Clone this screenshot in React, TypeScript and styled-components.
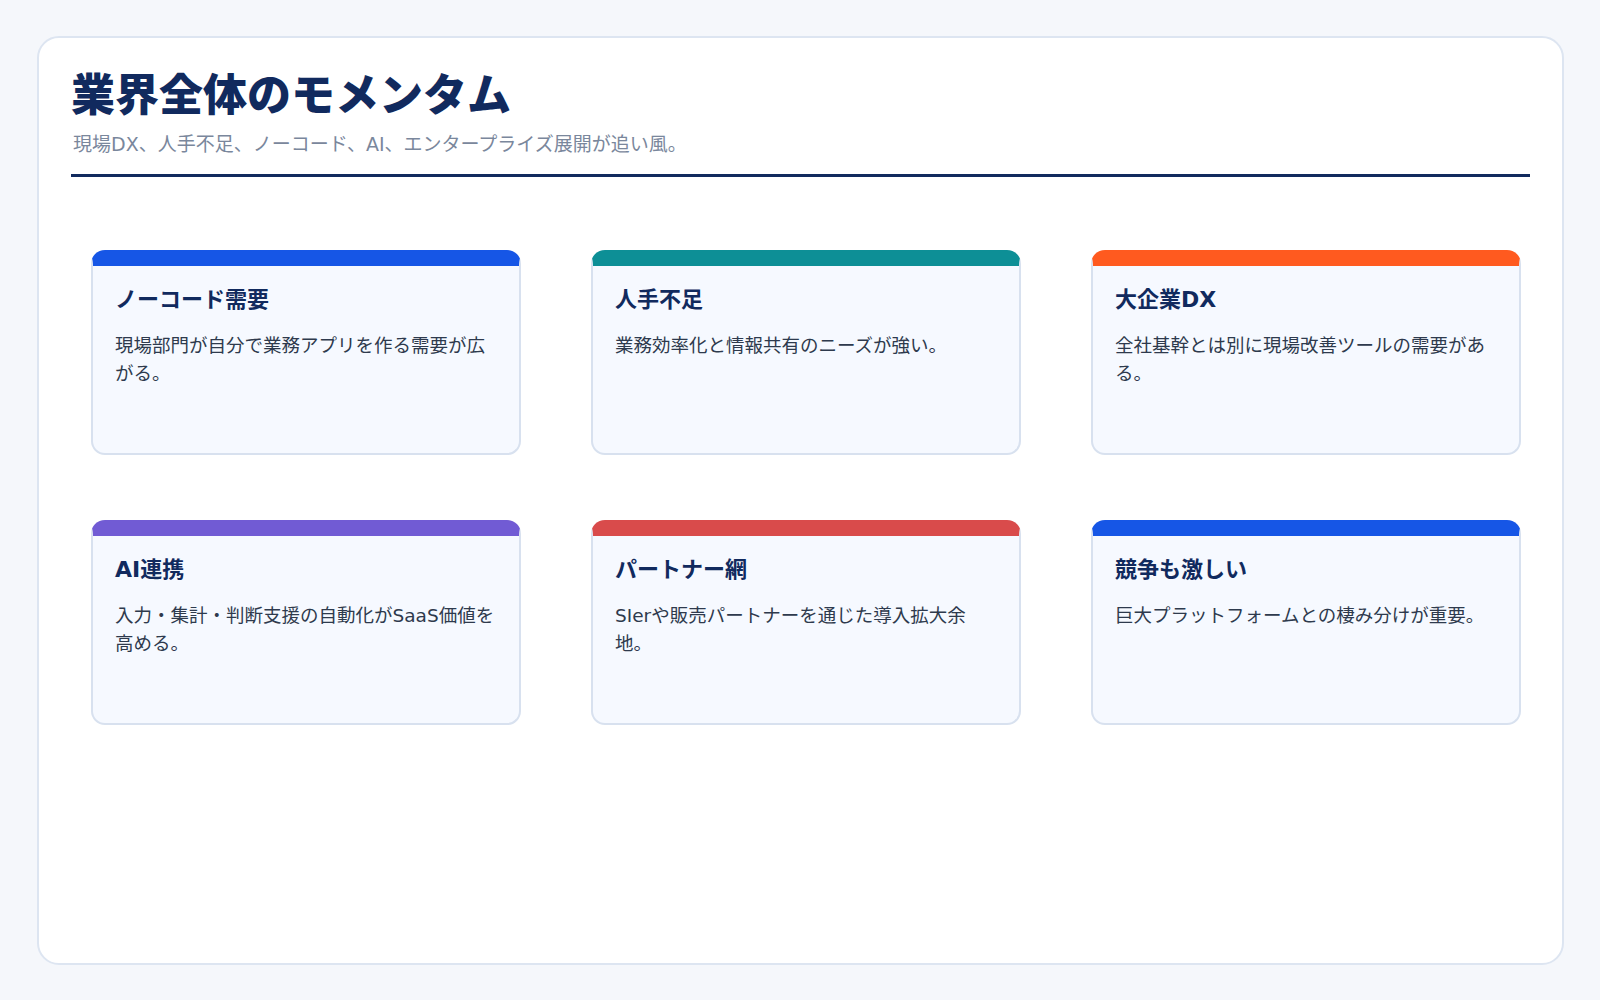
import React from "react";
import styled, { createGlobalStyle } from "styled-components";

const Global = createGlobalStyle`
  body { margin: 0; background: #f5f7fb; font-family: "DejaVu Sans", "Noto Sans CJK JP", sans-serif; }
`;
const Page = styled.div`padding: 36px 36px 35px 37px; box-sizing: border-box; height: 1000px;`;
const Panel = styled.div`
  background: #fff; border: 2px solid #dde5f1; border-radius: 22px; height: 100%;
  box-sizing: border-box; padding: 28px 32px;
`;
const Title = styled.h1`margin: 0; font-size: 44px; font-weight: 800; color: #112a5e; line-height: 60px;`;
const Sub = styled.p`margin: 4px 0 0 2px; font-size: 19px; color: #7a879c; line-height: 28px;`;
const Rule = styled.div`height: 3px; background: #112a5e; margin-top: 16px;`;
const Grid = styled.div`
  display: grid; grid-template-columns: repeat(3, 430px); column-gap: 70px; row-gap: 65px;
  margin: 73px 0 0 20px;
`;
const Card = styled.div<{ c: string }>`
  height: 205px; box-sizing: border-box; background: #f6f9ff;
  border: 2px solid #d8e1ef; border-top: 16px solid ${(p) => p.c}; border-radius: 14px;
  padding: 18px 22px;
`;
const CTitle = styled.h3`margin: 0; font-size: 22px; font-weight: 700; color: #112a5e; line-height: 32px;`;
const CText = styled.p`margin: 16px 0 0; font-size: 18.5px; color: #2e3a4d; line-height: 28px;`;

const items = [
  ["#1656e6", "ノーコード需要", "現場部門が自分で業務アプリを作る需要が広がる。"],
  ["#0d8f96", "人手不足", "業務効率化と情報共有のニーズが強い。"],
  ["#ff5a1f", "大企業DX", "全社基幹とは別に現場改善ツールの需要がある。"],
  ["#715bd4", "AI連携", "入力・集計・判断支援の自動化がSaaS価値を高める。"],
  ["#d94b4b", "パートナー網", "SIerや販売パートナーを通じた導入拡大余地。"],
  ["#1656e6", "競争も激しい", "巨大プラットフォームとの棲み分けが重要。"],
];

export default function App() {
  return (
    <Page>
      <Global />
      <Panel>
        <Title>業界全体のモメンタム</Title>
        <Sub>現場DX、人手不足、ノーコード、AI、エンタープライズ展開が追い風。</Sub>
        <Rule />
        <Grid>
          {items.map(([c, t, d]) => (
            <Card key={t} c={c}>
              <CTitle>{t}</CTitle>
              <CText>{d}</CText>
            </Card>
          ))}
        </Grid>
      </Panel>
    </Page>
  );
}
